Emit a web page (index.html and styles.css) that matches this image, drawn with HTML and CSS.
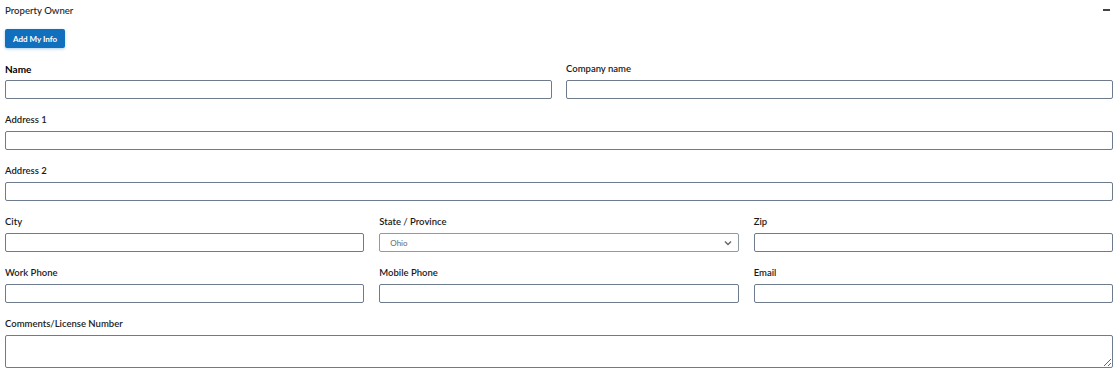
FILE: index.html
```html
<!DOCTYPE html>
<html>
<head>
<meta charset="utf-8">
<link rel="stylesheet" href="styles.css">
</head>
<body>
<div class="panel">
  <div class="header">
    <span class="title">Property Owner</span>
    <span class="collapse"></span>
  </div>
  <button class="btn">Add My Info</button>
  <div class="row cols2">
    <div class="field"><label class="lbl strong">Name</label><input class="inp" type="text"></div>
    <div class="field"><label class="lbl">Company name</label><input class="inp" type="text"></div>
  </div>
  <div class="row">
    <div class="field"><label class="lbl">Address 1</label><input class="inp" type="text"></div>
  </div>
  <div class="row">
    <div class="field"><label class="lbl">Address 2</label><input class="inp" type="text"></div>
  </div>
  <div class="row cols3">
    <div class="field"><label class="lbl">City</label><input class="inp" type="text"></div>
    <div class="field"><label class="lbl">State / Province</label>
      <div class="sel"><span class="selval">Ohio</span>
        <svg class="chev" width="8" height="6" viewBox="0 0 8 6"><path d="M1 1.5 L4 4.5 L7 1.5" fill="none" stroke="#666" stroke-width="1.4"/></svg>
      </div>
    </div>
    <div class="field"><label class="lbl">Zip</label><input class="inp" type="text"></div>
  </div>
  <div class="row cols3">
    <div class="field"><label class="lbl">Work Phone</label><input class="inp" type="text"></div>
    <div class="field"><label class="lbl">Mobile Phone</label><input class="inp" type="text"></div>
    <div class="field"><label class="lbl">Email</label><input class="inp" type="text"></div>
  </div>
  <div class="row">
    <div class="field"><label class="lbl">Comments/License Number</label><textarea class="ta"></textarea></div>
  </div>
</div>
</body>
</html>
```
FILE: styles.css
```css
html, body {
  margin: 0;
  padding: 0;
  background: #fff;
  font-family: Lato, "Liberation Sans", sans-serif;
  color: #111;
}
.panel {
  padding: 0 7px 0 5px;
  display: flex;
  flex-direction: column;
  align-items: flex-start;
}
.header {
  height: 20px;
  width: 100%;
  display: flex;
  align-items: center;
  justify-content: space-between;
}
.title {
  font-size: 9.6px;
  font-weight: 500;
  color: #222;
}
.collapse {
  width: 7px;
  height: 1.5px;
  background: #444;
  margin-right: 3px;
}
.btn {
  margin-top: 9px;
  height: 19px;
  padding: 0 8px;
  border: none;
  border-radius: 2px;
  background: #1170bd;
  color: #fff;
  font-family: Lato, "Liberation Sans", sans-serif;
  font-size: 8px;
  font-weight: 700;
  box-shadow: 0 1px 3px rgba(17, 112, 189, 0.35);
}
.row {
  width: 100%;
  display: grid;
  grid-template-columns: 1fr;
  column-gap: 15px;
  margin-top: 14px;
}
.cols2 { grid-template-columns: 1fr 1fr; column-gap: 14px; }
.cols3 { grid-template-columns: 1fr 1fr 1fr; }
.field {
  display: flex;
  flex-direction: column;
}
.lbl {
  font-size: 9.5px;
  font-weight: 600;
  line-height: 14px;
  height: 14px;
  margin-bottom: 4px;
  color: #1a1a1a;
}
.lbl.strong { font-size: 10px; font-weight: 700; color: #000; }
.inp, .sel, .ta {
  box-sizing: border-box;
  height: 19px;
  width: 100%;
  margin: 0;
  border: 1px solid #6d7b8c;
  border-radius: 2px;
  background: #fff;
}
.sel {
  border-color: #8f9aa6;
  display: flex;
  align-items: center;
  justify-content: space-between;
  padding: 0 6px 0 10px;
}
.selval {
  font-size: 8px;
  color: #666;
}
.ta {
  height: 33px;
  resize: vertical;
  display: block;
}
```
